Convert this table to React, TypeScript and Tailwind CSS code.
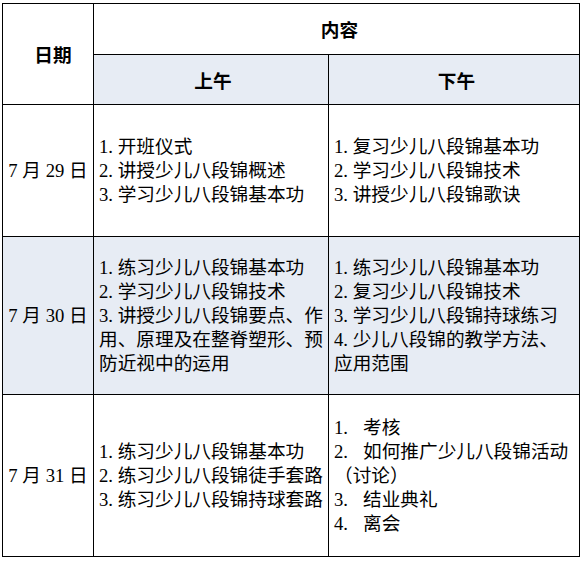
import React from "react";

type Line = [string, string];

const body = "font-['Liberation_Serif','Noto_Sans_CJK_SC',serif] text-[18.67px] leading-[24px] text-black";
const head = "font-['Noto_Sans_CJK_SC',sans-serif] font-bold text-[18.67px] text-black";

const rows: { date: string; am: Line[]; pm: Line[]; wide?: boolean; shaded: boolean }[] = [
  {
    date: "7 月 29 日",
    shaded: false,
    am: [
      ["1.", "开班仪式"],
      ["2.", "讲授少儿八段锦概述"],
      ["3.", "学习少儿八段锦基本功"],
    ],
    pm: [
      ["1.", "复习少儿八段锦基本功"],
      ["2.", "学习少儿八段锦技术"],
      ["3.", "讲授少儿八段锦歌诀"],
    ],
  },
  {
    date: "7 月 30 日",
    shaded: true,
    am: [
      ["1.", "练习少儿八段锦基本功"],
      ["2.", "学习少儿八段锦技术"],
      ["3.", "讲授少儿八段锦要点、作"],
      ["", "用、原理及在整脊塑形、预"],
      ["", "防近视中的运用"],
    ],
    pm: [
      ["1.", "练习少儿八段锦基本功"],
      ["2.", "复习少儿八段锦技术"],
      ["3.", "学习少儿八段锦持球练习"],
      ["4.", "少儿八段锦的教学方法、"],
      ["", "应用范围"],
    ],
  },
  {
    date: "7 月 31 日",
    shaded: false,
    wide: true,
    am: [
      ["1.", "练习少儿八段锦基本功"],
      ["2.", "练习少儿八段锦徒手套路"],
      ["3.", "练习少儿八段锦持球套路"],
    ],
    pm: [
      ["1.", "考核"],
      ["2.", "如何推广少儿八段锦活动"],
      ["", "（讨论）"],
      ["3.", "结业典礼"],
      ["4.", "离会"],
    ],
  },
];

function Lines({ lines, wide, bg }: { lines: Line[]; wide?: boolean; bg: string }) {
  return (
    <div className={`${bg} ${body} flex flex-col justify-center px-[5px]`}>
      {lines.map(([num, text], i) => (
        <div key={i} className="whitespace-nowrap">
          {num && <span className={`inline-block ${wide ? "w-[29px]" : "w-[18.67px]"}`}>{num}</span>}
          {text}
        </div>
      ))}
    </div>
  );
}

export default function App() {
  return (
    <div className="bg-white min-h-[561px] pl-[2px] pt-[3px]">
      <div className="grid w-[578px] grid-cols-[90px_234px_250px] grid-rows-[50px_49px_131px_157px_161px] gap-px bg-black p-px">
        <div className={`row-span-2 bg-white flex items-center justify-center pl-[10px] ${head}`}>日期</div>
        <div className={`col-span-2 bg-white flex items-center justify-center pl-[6px] ${head}`}>内容</div>
        <div className={`bg-[#e7ecf4] flex items-center justify-center pl-[4px] ${head}`}>上午</div>
        <div className={`bg-[#e7ecf4] flex items-center justify-center pl-[5px] ${head}`}>下午</div>
        {rows.map((r) => {
          const bg = r.shaded ? "bg-[#e7ecf4]" : "bg-white";
          return (
            <React.Fragment key={r.date}>
              <div className={`${bg} ${body} flex items-center justify-center whitespace-nowrap`}>{r.date}</div>
              <Lines lines={r.am} bg={bg} />
              <Lines lines={r.pm} wide={r.wide} bg={bg} />
            </React.Fragment>
          );
        })}
      </div>
    </div>
  );
}
